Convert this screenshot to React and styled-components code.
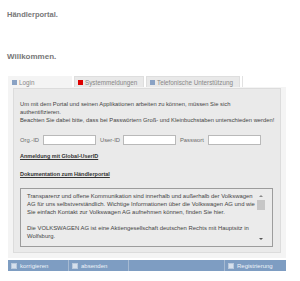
import styled, { createGlobalStyle } from "styled-components"

const GlobalStyle = createGlobalStyle`
  body {
    margin: 0;
    background: #fff;
    font-family: "Liberation Sans", Arial, sans-serif;
  }
`

const Page = styled.div`
  padding: 9px 0 0 7px;
  width: 300px;
  box-sizing: border-box;
`

const Heading = styled.h1`
  margin: ${(p) => p.$top}px 0 0 0;
  font-size: ${(p) => p.$size}px;
  line-height: 12px;
  font-weight: 700;
  color: #777;
`

const Main = styled.div`
  margin: 13px 0 0 1px;
  width: 278px;
`

const TabRow = styled.div`
  display: flex;
  gap: 2px;
  height: 11px;
`

const Tab = styled.div`
  width: ${(p) => p.$w}px;
  box-sizing: border-box;
  display: flex;
  align-items: center;
  gap: 2px;
  padding-left: 3px;
  background: ${(p) => (p.$active ? "#f4f4f4" : "#e9e9e9")};
  border: 1px solid ${(p) => (p.$active ? "#f4f4f4" : "#dedede")};
  border-bottom: none;
  font-size: 6.3px;
  color: #888;
  white-space: nowrap;
`

const TabMark = styled.span`
  width: 5px;
  height: 5px;
  background: ${(p) => p.$color};
  flex: none;
`

const TabEdge = styled.div`
  width: 1px;
  background: #e2e2e2;
`

const Container = styled.div`
  background: #f4f4f4;
  padding: 1px 5px 5px 5px;
`

const Panel = styled.div`
  background: #eaeaea;
  border: 1px solid #dcdcdc;
  padding: 11px 7px 5px 6px;
  font-size: 5.8px;
  line-height: 8px;
  color: #444;
`

const Para = styled.p`
  margin: 0;
  white-space: nowrap;
`

const InputRow = styled.div`
  display: flex;
  align-items: center;
  margin-top: 11px;
  height: 10px;
`

const Label = styled.label`
  width: ${(p) => p.$w}px;
  flex: none;
  color: #6a6a6a;
`

const Field = styled.input`
  width: 53px;
  height: 10px;
  box-sizing: border-box;
  border: 1px solid #b9b9b9;
  background: #fff;
  padding: 0;
  margin: 0 4px 0 0;
  flex: none;
`

const DocLink = styled.a`
  display: block;
  margin-top: ${(p) => p.$top}px;
  font-size: 5.5px;
  font-weight: 700;
  color: #333;
  text-decoration: underline;
  white-space: nowrap;
`

const InfoBox = styled.div`
  display: flex;
  margin-top: 10px;
  height: 59px;
  box-sizing: border-box;
  border: 1px solid #9c9c9c;
  background: #ebebeb;
`

const InfoText = styled.div`
  flex: 1;
  padding: 3px 2px 0 6px;
  font-size: 5.9px;
  white-space: nowrap;
  overflow: hidden;
`

const Scroll = styled.div`
  width: 8px;
  margin: 4px 7px 4px 0;
  display: flex;
  flex-direction: column;
  align-items: center;
`

const Arrow = styled.span`
  width: 0;
  height: 0;
  border-left: 2px solid transparent;
  border-right: 2px solid transparent;
  ${(p) => (p.$up ? "border-bottom: 2px solid #8a8a8a;" : "border-top: 2px solid #555;")}
  margin: 2px 0;
`

const Thumb = styled.div`
  width: 8px;
  height: 10px;
  margin-top: 1px;
  background: #c6c6c6;
`

const Spacer = styled.div`
  flex: 1;
`

const Bar = styled.div`
  display: grid;
  grid-template-columns: 60px 59px 95px 1fr;
  gap: 1px;
  margin-top: 2px;
  height: 11px;
  background: #a6bad2;
`

const BarButton = styled.div`
  display: flex;
  align-items: center;
  gap: 3px;
  padding-left: 3px;
  background: #7e9dc2;
  font-size: 6px;
  color: #eef2f8;
  white-space: nowrap;
`

const BarMark = styled.span`
  width: 4px;
  height: 4px;
  background: #d6e0ec;
  border: 1px solid #b9c9dd;
  flex: none;
`

export default function App() {
  return (
    <>
      <GlobalStyle />
      <Page>
        <Heading $size={7.5} $top={0}>Händlerportal.</Heading>
        <Heading $size={8} $top={30}>Willkommen.</Heading>
        <Main>
          <TabRow>
            <Tab $w={64} $active>
              <TabMark $color="#8aa2c4" />
              Login
            </Tab>
            <Tab $w={70}>
              <TabMark $color="#dd0000" />
              Systemmeldungen
            </Tab>
            <Tab $w={94}>
              <TabMark $color="#8aa2c4" />
              Telefonische Unterstützung
            </Tab>
            <TabEdge />
          </TabRow>
          <Container>
            <Panel>
              <Para>
                Um mit dem Portal und seinen Applikationen arbeiten zu können, müssen Sie sich
                <br />
                authentifizieren.
                <br />
                Beachten Sie dabei bitte, dass bei Passwörtern Groß- und Kleinbuchstaben unterschieden werden!
              </Para>
              <InputRow>
                <Label $w={23}>Org.-ID</Label>
                <Field type="text" />
                <Label $w={23}>User-ID</Label>
                <Field type="text" />
                <Label $w={28}>Passwort</Label>
                <Field type="password" />
              </InputRow>
              <DocLink $top={7}>Anmeldung mit Global-UserID</DocLink>
              <DocLink $top={10}>Dokumentation zum Händlerportal</DocLink>
              <InfoBox>
                <InfoText>
                  Transparenz und offene Kommunikation sind innerhalb und außerhalb der Volkswagen
                  <br />
                  AG für uns selbstverständlich. Wichtige Informationen über die Volkswagen AG und wie
                  <br />
                  Sie einfach Kontakt zur Volkswagen AG aufnehmen können, finden Sie hier.
                  <br />
                  <br />
                  Die VOLKSWAGEN AG ist eine Aktiengesellschaft deutschen Rechts mit Hauptsitz in
                  <br />
                  Wolfsburg.
                </InfoText>
                <Scroll>
                  <Arrow $up />
                  <Thumb />
                  <Spacer />
                  <Arrow />
                </Scroll>
              </InfoBox>
            </Panel>
          </Container>
          <Bar>
            <BarButton>
              <BarMark />
              korrigieren
            </BarButton>
            <BarButton>
              <BarMark />
              absenden
            </BarButton>
            <BarButton />
            <BarButton>
              <BarMark />
              Registrierung
            </BarButton>
          </Bar>
        </Main>
      </Page>
    </>
  )
}
